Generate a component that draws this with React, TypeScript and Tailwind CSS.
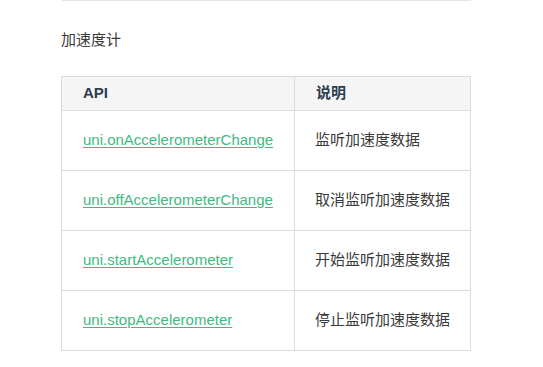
const rows = [
  { api: "uni.onAccelerometerChange", desc: "监听加速度数据" },
  { api: "uni.offAccelerometerChange", desc: "取消监听加速度数据" },
  { api: "uni.startAccelerometer", desc: "开始监听加速度数据" },
  { api: "uni.stopAccelerometer", desc: "停止监听加速度数据" },
];

export default function App() {
  return (
    <div
      className="min-h-[367px] w-full bg-white"
      style={{ fontFamily: '"Liberation Sans", Arial, "Noto Sans CJK SC", sans-serif' }}
    >
      <div className="ml-[61px] w-[410px]">
        {/* divider left over from the section above */}
        <div className="ml-px h-px bg-[#e4e4e4]" />

        <h3 className="mt-[27px] text-[15px] leading-6 font-normal text-[#3a3a3a]">加速度计</h3>

        <table className="mt-6 w-[410px] table-fixed border-collapse text-[15px] text-[#3a3a3a]">
          <colgroup>
            <col className="w-[233px]" />
            <col />
          </colgroup>
          <thead>
            <tr className="h-[34px] bg-[#f5f5f5]">
              <th className="border border-[#dcdcdc] px-[21px] text-left font-bold text-[#2c3e50]">API</th>
              <th className="border border-[#dcdcdc] px-[21px] text-left font-bold text-[#2c3e50]">说明</th>
            </tr>
          </thead>
          <tbody>
            {rows.map((r) => (
              <tr key={r.api} className="h-[60px]">
                <td className="border border-[#dcdcdc] px-[21px] whitespace-nowrap">
                  <a href="#" className="text-[#42b983] underline underline-offset-2">
                    {r.api}
                  </a>
                </td>
                <td className="border border-[#dcdcdc] pl-[20px] pr-0 whitespace-nowrap">{r.desc}</td>
              </tr>
            ))}
          </tbody>
        </table>
      </div>
    </div>
  );
}
